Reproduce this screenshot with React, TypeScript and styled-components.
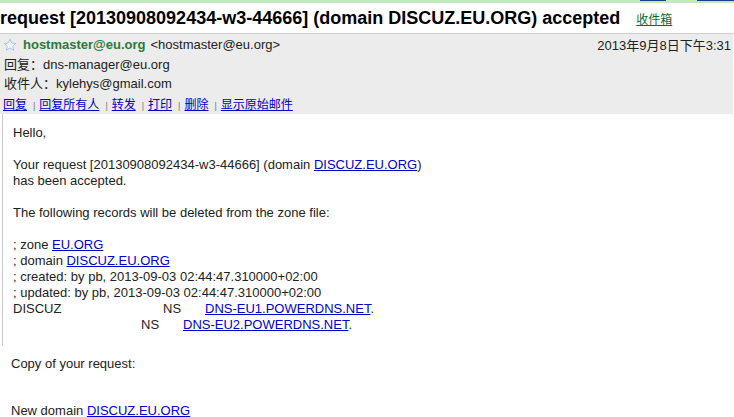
import styled, { createGlobalStyle } from 'styled-components';

const GlobalStyle = createGlobalStyle`
  html, body {
    margin: 0;
    padding: 0;
    background: #fff;
  }
  body {
    font-family: Arial, "Liberation Sans", "Noto Sans CJK SC", sans-serif;
    font-size: 13px;
    color: #000;
    overflow: hidden;
  }
`;

const cjk = `"Liberation Sans", Arial, "Noto Sans CJK SC", sans-serif`;

export default function App() {
  return (
    <Page>
      <GlobalStyle />
      <TopStrip>
        <StripMark $left={640} $width={26} />
        <StripMark $left={697} $width={37} />
      </TopStrip>

      <TitleRow>
        <Subject>request [20130908092434-w3-44666] (domain DISCUZ.EU.ORG) accepted</Subject>
        <Label>收件箱</Label>
      </TitleRow>

      <Header>
        <HeaderLine>
          <Star viewBox="0 0 14 14">
            <path
              d="M7 1.2 L8.7 5.1 L12.8 5.4 L9.7 8.1 L10.6 12.2 L7 10 L3.4 12.2 L4.3 8.1 L1.2 5.4 L5.3 5.1 Z"
              fill="#f4f8fd"
              stroke="#a9c3e6"
              strokeWidth="1"
              strokeLinejoin="round"
            />
          </Star>
          <Sender>hostmaster@eu.org</Sender>
          <Address>&lt;hostmaster@eu.org&gt;</Address>
          <Date>2013年9月8日下午3:31</Date>
        </HeaderLine>
        <HeaderLine>回复：dns-manager@eu.org</HeaderLine>
        <HeaderLine>收件人：kylehys@gmail.com</HeaderLine>
        <Actions>
          <Action href="#">回复</Action>
          <Sep>|</Sep>
          <Action href="#">回复所有人</Action>
          <Sep>|</Sep>
          <Action href="#">转发</Action>
          <Sep>|</Sep>
          <Action href="#">打印</Action>
          <Sep>|</Sep>
          <Action href="#">删除</Action>
          <Sep>|</Sep>
          <Action href="#">显示原始邮件</Action>
        </Actions>
      </Header>

      <Quoted>
        <Para>Hello,</Para>
        <Para>
          Your request [20130908092434-w3-44666] (domain <Link href="#">DISCUZ.EU.ORG</Link>)
          <br />
          has been accepted.
        </Para>
        <Para>The following records will be deleted from the zone file:</Para>
        <Records>
          <div>; zone <Link href="#">EU.ORG</Link></div>
          <div>; domain <Link href="#">DISCUZ.EU.ORG</Link></div>
          <div>; created: by pb, 2013-09-03 02:44:47.310000+02:00</div>
          <div>; updated: by pb, 2013-09-03 02:44:47.310000+02:00</div>
          <RecordRow>
            <RecordName>DISCUZ</RecordName>
            <RecordType>NS</RecordType>
            <span><Link href="#">DNS-EU1.POWERDNS.NET</Link>.</span>
          </RecordRow>
          <RecordRow>
            <RecordName $short />
            <RecordType>NS</RecordType>
            <span><Link href="#">DNS-EU2.POWERDNS.NET</Link>.</span>
          </RecordRow>
        </Records>
      </Quoted>

      <Plain>
        <Para>Copy of your request:</Para>
        <Para $gap={31}>New domain <Link href="#">DISCUZ.EU.ORG</Link></Para>
      </Plain>
    </Page>
  );
}

const Page = styled.div`
  width: 734px;
  height: 417px;
  overflow: hidden;
`;

const TopStrip = styled.div`
  position: relative;
  height: 3px;
  background: #c3e9bf;
`;

const StripMark = styled.span<{ $left: number; $width: number }>`
  position: absolute;
  top: 0;
  left: ${p => p.$left}px;
  width: ${p => p.$width}px;
  height: 1px;
  background: #1d3f8a;
`;

const TitleRow = styled.div`
  display: flex;
  align-items: baseline;
  height: 30px;
  border-bottom: 1px solid #cfcfcf;
  white-space: nowrap;
`;

const Subject = styled.h1`
  margin: 0;
  font-family: Arial, "Liberation Sans", sans-serif;
  font-size: 18px;
  font-weight: bold;
  line-height: 31px;
  color: #000;
`;

const Label = styled.a`
  margin-left: 16px;
  font-family: ${cjk};
  font-size: 12px;
  color: #0b6b2e;
  text-decoration: underline;
`;

const Header = styled.div`
  background: #ececec;
  width: 733px;
  height: 80px;
  padding-top: 1px;
  box-sizing: border-box;
`;

const HeaderLine = styled.div`
  display: flex;
  align-items: center;
  height: 19px;
  padding-left: 4px;
  font-family: ${cjk};
  font-size: 13px;
  color: #222;
  white-space: nowrap;
`;

const Star = styled.svg`
  width: 14px;
  height: 14px;
  margin: 0 6px 0 -1px;
`;

const Sender = styled.span`
  font-weight: bold;
  color: #2a7a3a;
  margin-right: 5px;
`;

const Address = styled.span`
  color: #222;
`;

const Date = styled.span`
  margin-left: auto;
  color: #222;
  padding-right: 2px;
`;

const Actions = styled.div`
  display: flex;
  align-items: baseline;
  height: 22px;
  padding-top: 3px;
  padding-left: 3px;
  box-sizing: border-box;
  font-family: ${cjk};
  font-size: 12px;
  white-space: nowrap;
`;

const Action = styled.a`
  color: #0000cc;
  text-decoration: underline;
`;

const Sep = styled.span`
  font-size: 9px;
  color: #777;
  margin: 0 4px 0 6px;
`;

const Quoted = styled.div`
  margin-left: 2px;
  border-left: 1px solid #c8c8c8;
  padding: 11px 0 13px 10px;
  font-family: Arial, "Liberation Sans", sans-serif;
  font-size: 13px;
  line-height: 16px;
  color: #222;
`;

const Para = styled.p<{ $gap?: number }>`
  margin: ${p => p.$gap ?? 0}px 0 16px;
  &:last-child {
    margin-bottom: 0;
  }
`;

const Records = styled.div`
  white-space: nowrap;
`;

const RecordRow = styled.div`
  display: flex;
`;

const RecordName = styled.span<{ $short?: boolean }>`
  width: ${p => (p.$short ? 128 : 150)}px;
`;

const RecordType = styled.span`
  width: 42px;
`;

const Link = styled.a`
  color: #0000cc;
  text-decoration: underline;
`;

const Plain = styled.div`
  padding: 10px 0 0 11px;
  font-family: Arial, "Liberation Sans", sans-serif;
  font-size: 13px;
  line-height: 16px;
  color: #222;
`;
